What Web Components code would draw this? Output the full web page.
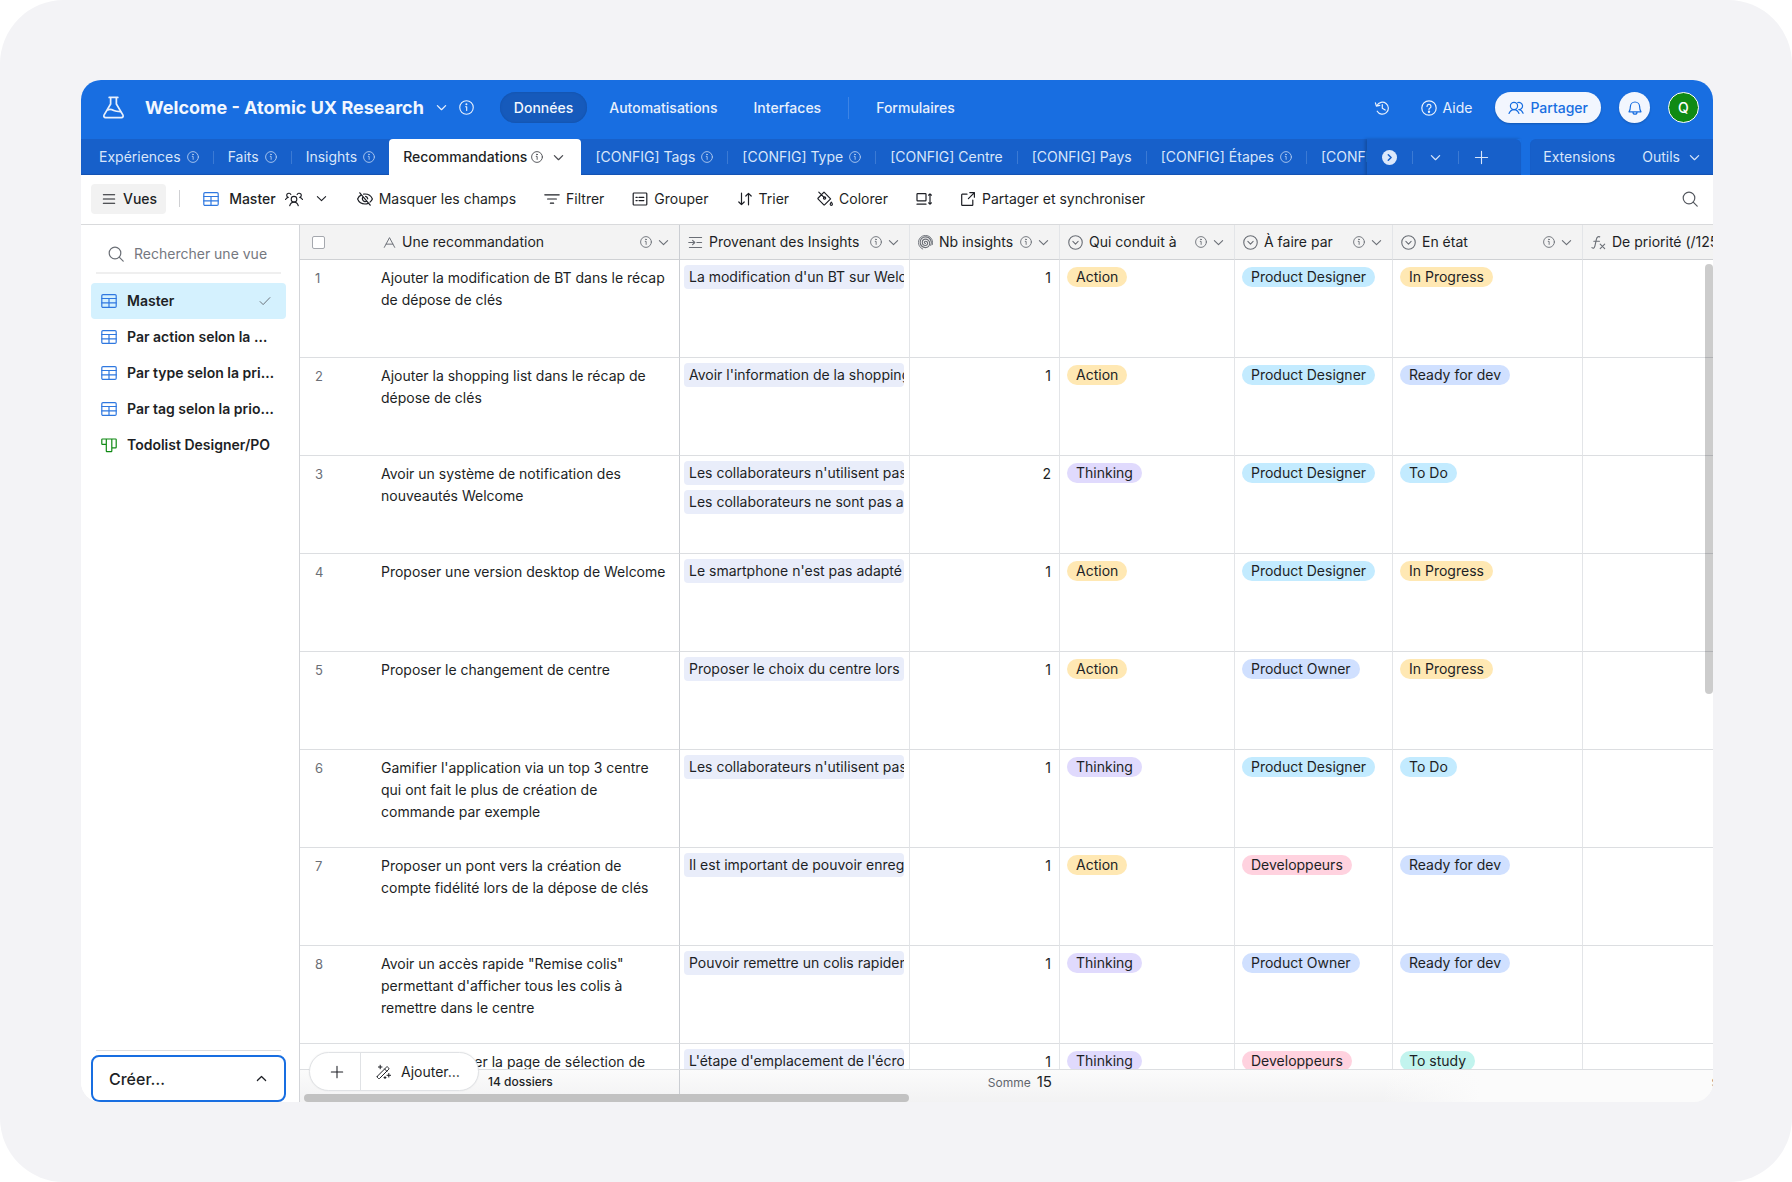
<!DOCTYPE html>
<html lang="fr">
<head>
<meta charset="utf-8">
<title>Welcome - Atomic UX Research</title>
<style>
  html { background: #fff; }
  body { margin: 0; height: 100vh; font: 400 14px/22px Inter, "Liberation Sans", sans-serif; color: #1d1f25; }
</style>
</head>
<body>
<base-app></base-app>

<script>
const ICONS = {
  flask: '<path d="M5 1h6M6 1v4.6L1.5 13.1c-.6 1 0 1.9 1 1.9h11c1 0 1.6-.9 1-1.9L10 5.6V1"/><path d="M4 9.7c1.600-.7 2.800-.3 4.200.4 1.400.7 2.800.7 4.600.7"/>',
  info: '<circle cx="8" cy="8" r="7.200"/><path d="M7 7.200h1.200v4"/><circle cx="7.900" cy="4.600" r=".5" fill="currentColor"/>',
  down: '<path d="M2 5.200l6 6 6-6"/>',
  up: '<path d="M2 11l6-6 6 6"/>',
  history: '<path d="M3 5.500A6 6 0 1 1 3.200 11.200M1.400 2.800l1 3.300 3.400-.7M8.300 4.600V8.300l2.900 1.700"/>',
  help: '<circle cx="8" cy="8" r="7.200"/><path d="M6 6.400a2 2 0 1 1 2.800 1.800c-.6.3-.8.6-.8 1.200"/><circle cx="8" cy="11.700" r=".6" fill="currentColor"/>',
  share: '<circle cx="6" cy="6" r="3.600"/><path d="M1 13.500c1-2.500 2.700-3.900 5-3.900s4 1.400 5 3.900M9.800 2.600a3.600 3.600 0 1 1 1 7c2 0 3.300 1.400 4.300 3.700"/>',
  bell: '<path d="M3.400 6.600a4.600 4.600 0 0 1 9.200 0c0 2.600.6 4 1.400 5.200H2c.8-1.200 1.400-2.600 1.400-5.200zM6 12.200a2 2 0 0 0 4 0"/>',
  next: '<circle cx="8" cy="8" r="8" fill="#dce8fb" stroke="none"/><path d="M6.700 5l3 3-3 3" stroke="#1760ca" stroke-width="1.600"/>',
  plus: '<path d="M8 1.500v13M1.500 8h13"/>',
  menu: '<path d="M1.500 3.200h13M1.500 8h13M1.500 12.800h13"/>',
  grid: '<rect x=".8" y="1.600" width="14.400" height="12.800" rx="1.200"/><path d="M.8 5.500h14.400M.8 9.900h14.400M8 5.500v8.900"/>',
  kanban: '<path d="M1.400 2h13.200c.4 0 .6.200.6.600v7.600c0 .4-.2.600-.6.600h-3.800v3.200c0 .4-.2.600-.6.600H5.900c-.4 0-.6-.2-.6-.6V7.400H1.400c-.4 0-.6-.2-.6-.6V2.600c0-.4.2-.6.600-.6zM5.300 2v5.400M10.800 2v8.800"/>',
  people: '<circle cx="8" cy="8.200" r="2.500"/><path d="M4.200 14c.6-2 2-3.200 3.800-3.200s3.200 1.200 3.800 3.200M5.200 4A1.900 1.900 0 1 0 3 6.600C1.900 6.700 1 7.400.5 8.400M10.800 4A1.900 1.900 0 1 1 13 6.600c1.100.1 2 .8 2.500 1.800"/>',
  hide: '<path d="M2.800 1.800l10.400 12.400M4.400 3.900C2.300 5 1 7 .6 8c.9 2.200 3.600 5 7.400 5 1.300 0 2.500-.3 3.500-.8M6.600 3.200C7 3.100 7.500 3 8 3c3.800 0 6.500 2.800 7.400 5-.4.9-1.200 2.100-2.400 3.100M9.800 10a2.700 2.700 0 0 1-3.600-4M8.600 5.400a2.700 2.700 0 0 1 2.100 2.400"/>',
  filter: '<path d="M.8 3.800h14.400M3.600 8h8.800M6.400 12.200h3.200"/>',
  group: '<rect x="1.200" y="2" width="13.600" height="12" rx=".8"/><path d="M7 6.400h4.800M7 9.600h4.800M4 6.400h1.200M4 9.600h1.200"/>',
  sort: '<path d="M4.500 2.200v11.400M1.800 11l2.700 2.700L7.200 11M11.500 13.800V2.400M8.800 5l2.700-2.700L14.200 5"/>',
  color: '<path d="M1.800 1.200l5.500 5.500M7 1.200l6.600 6.600-5.800 5.800c-.4.400-.8.400-1.200 0L1.200 8.200c-.4-.4-.4-.8 0-1.200z"/><circle cx="7.600" cy="7" r="1.100"/><path d="M14.300 11.200c.7.900 1.100 1.500 1.100 2.100a1.100 1.100 0 0 1-2.200 0c0-.6.4-1.200 1.100-2.100z"/>',
  height: '<rect x="1" y="2.600" width="9" height="7.200" rx=".6"/><path d="M1 13.200h9M14 2.800v10.400M12.600 4.200L14 2.800l1.400 1.400M12.600 11.800l1.400 1.400 1.400-1.400"/>',
  external: '<path d="M7 3.200H2.300c-.4 0-.6.200-.6.600v9.900c0 .4.200.6.600.6h9.900c.4 0 .6-.2.600-.6V9M9.800 1.600h4.600v4.600M14.200 1.800L8.400 7.600"/>',
  search: '<circle cx="7" cy="7" r="5.800"/><path d="M11.200 11.200l4 4"/>',
  check: '<path d="M1.500 8.800l4 4L14.500 3.500"/>',
  text: '<path d="M1.600 14L8 2l6.400 12M3.900 10h8.200"/>',
  link: '<path d="M1.500 2.700h13M9.500 8h5M1.500 13.300h13M.8 8h6.400M4.900 5.700L7.200 8l-2.300 2.300"/>',
  count: '<path d="M8 9A1.200 1.200 0 0 1 8 6.600A2.300 2.300 0 0 1 8 11.200A3.400 3.400 0 0 1 8 4.400A4.500 4.500 0 0 1 8 13.400A5.700 5.700 0 0 1 8 2A6.200 6.200 0 0 1 13.600 11"/><path d="M5 15A7.600 7.600 0 1 1 15.300 10.300" stroke-width="1"/>',
  select: '<circle cx="8" cy="8" r="7.200"/><path d="M5.200 6.900L8 9.700l2.800-2.800"/>',
  formula: '<path d="M1 13.500c1.600 1.300 2.700.4 3.200-1.800l1.600-7.200C6.300 2.300 7.500 1.200 9.300 2M3 6.700h6M9.800 9.700l4.800 4.800M14.600 9.700l-4.800 4.800"/>',
  wand: '<path d="M1.300 12.300L10.600 3c.3-.3.700-.3 1 0l1.200 1.200c.3.300.3.700 0 1L3.500 14.500c-.3.300-.7.300-1 0l-1.200-1.200c-.3-.3-.3-.7 0-1zM8.600 5l2.200 2.200M4.200 1.200v3.600M2.400 3H6M12.800 9.500v3.600M11 11.300h3.600M9 12.600v2M8 13.600h2"/>',
};

class UiIcon extends HTMLElement {
  connectedCallback() {
    const size = this.getAttribute('size') || 16;
    const weight = this.getAttribute('weight') || 1.200;
    this.attachShadow({ mode: 'open' }).innerHTML = `
      <style>:host{display:inline-flex;flex:none}svg{display:block;fill:none;stroke:currentColor;stroke-width:${weight};stroke-linecap:round;stroke-linejoin:round}</style>
      <svg width="${size}" height="${size}" viewBox="0 0 16 16" aria-hidden="true">${ICONS[this.getAttribute('name')]}</svg>`;
  }
}

const BUTTON_RESET = 'button,a{font:inherit;color:inherit;background:none;border:0;padding:0;margin:0;text-decoration:none;white-space:nowrap;display:flex;align-items:center}*{box-sizing:border-box}';

class TopBar extends HTMLElement {
  connectedCallback() {
    this.attachShadow({ mode: 'open' }).innerHTML = `
      <style>
        ${BUTTON_RESET}
        :host{display:flex;align-items:center;height:59px;padding:0 14px 4px 21px;background:#186ee1;color:#e8f0fc;box-sizing:border-box}
        h1{margin:0 0 0 20px;font-size:18px;line-height:24px;font-weight:700;color:#f2f7fe;white-space:nowrap}
        .t{gap:12px}
        .i{margin-left:12px}
        nav{display:flex;align-items:center;margin-left:26px;font-weight:500}
        nav a{height:31px;padding:0 14px;border-radius:16px}
        nav a.on{background:#165abb;color:#f2f7fe;box-shadow:inset 0 0 2px #124c9f}
        nav a.b{margin-left:8px}
        .sep{width:1px;height:22px;background:#3c84e6;margin:0 13px}
        .r{display:flex;align-items:center;margin-left:auto}
        .help{gap:6px;margin:0 23px 0 31px}
        .share{height:31px;padding:0 13px;gap:6px;border-radius:16px;background:#f2f6fe;color:#186ee1;font-weight:500;box-shadow:0 1px 2px #0003}
        .bell{width:31px;height:31px;justify-content:center;border-radius:50%;background:#f2f6fe;color:#186ee1;margin:0 18px;box-shadow:0 1px 2px #0003}
        .me{width:31px;height:31px;justify-content:center;border-radius:50%;border:1px solid #fff;background:#108a14;color:#fff;font-weight:500}
      </style>
      <ui-icon name="flask" size="23"></ui-icon>
      <button class="t"><h1>Welcome - Atomic UX Research</h1><ui-icon name="down" size="11" weight="1.800"></ui-icon></button>
      <button class="i" aria-label="Informations"><ui-icon name="info" size="15"></ui-icon></button>
      <nav>
        <a class="on" href="#">Données</a><a class="b" href="#">Automatisations</a><a class="b" href="#">Interfaces</a>
        <span class="sep"></span><a href="#">Formulaires</a>
      </nav>
      <div class="r">
        <button aria-label="Historique"><ui-icon name="history"></ui-icon></button>
        <button class="help"><ui-icon name="help"></ui-icon>Aide</button>
        <button class="share"><ui-icon name="share"></ui-icon>Partager</button>
        <button class="bell" aria-label="Notifications"><ui-icon name="bell"></ui-icon></button>
        <button class="me">Q</button>
      </div>`;
  }
}

class TableTab extends HTMLElement {
  connectedCallback() {
    this.attachShadow({ mode: 'open' }).innerHTML = `
      <style>
        ${BUTTON_RESET}
        :host{display:flex;flex:none;align-items:center;height:36px}
        a{gap:6px;padding:0 14px;height:36px}
        ui-icon{opacity:.8}
        :host(:not([active]):not([last]))::after{content:"";width:1px;height:13px;background:#3b7ad4}
        :host([active]) a{gap:4px;padding-right:17px;background:#fff;color:#1d1f25;font-weight:500;border-radius:4px 4px 0 0}
        .c{margin-left:6px}
      </style>
      <a href="#"><slot></slot>${this.hasAttribute('info') ? '<ui-icon name="info" size="12"></ui-icon>' : ''}${this.hasAttribute('active') ? '<ui-icon class="c" name="down" size="11" weight="1.800"></ui-icon>' : ''}</a>`;
  }
}

class TableTabs extends HTMLElement {
  connectedCallback() {
    this.attachShadow({ mode: 'open' }).innerHTML = `
      <style>
        ${BUTTON_RESET}
        :host{display:flex;height:36px;background:#186ee1;color:#d9e6fa}
        .bar{display:flex;flex:1;min-width:0;background:#1760ca;border-radius:0 6px 0 0;box-shadow:inset 0 -1px 1px #1453b2}
        nav{display:flex;flex:1;min-width:0;overflow:hidden;padding-left:4px}
        .ctl{display:flex;align-items:center;box-shadow:-2px 0 3px #0003}
        .ctl button{height:36px;justify-content:center}
        .n{width:45px}.d{width:45px}.p{width:62px;padding-right:17px}
        .sep{width:1px;height:13px;background:#3b7ad4}
        .ext{display:flex;align-items:center;margin-left:9px;padding:0 13px;background:#1760ca;border-radius:6px 0 0 0;gap:27px;box-shadow:inset 0 -1px 1px #1453b2}
        .o{gap:9px}
      </style>
      <div class="bar">
        <nav>
          <table-tab info>Expériences</table-tab>
          <table-tab info>Faits</table-tab>
          <table-tab info last>Insights</table-tab>
          <table-tab info active>Recommandations</table-tab>
          <table-tab info>[CONFIG] Tags</table-tab>
          <table-tab info>[CONFIG] Type</table-tab>
          <table-tab>[CONFIG] Centre</table-tab>
          <table-tab>[CONFIG] Pays</table-tab>
          <table-tab info>[CONFIG] Étapes</table-tab>
          <table-tab>[CONFIG]</table-tab>
        </nav>
        <div class="ctl">
          <button class="n" aria-label="Tables suivantes"><ui-icon name="next" size="15"></ui-icon></button><span class="sep"></span>
          <button class="d" aria-label="Toutes les tables"><ui-icon name="down" size="11" weight="1.800"></ui-icon></button><span class="sep"></span>
          <button class="p" aria-label="Ajouter une table"><ui-icon name="plus" size="15"></ui-icon></button>
        </div>
      </div>
      <div class="ext"><button>Extensions</button><button class="o">Outils<ui-icon name="down" size="11" weight="1.800"></ui-icon></button></div>`;
  }
}

class ToolButton extends HTMLElement {
  connectedCallback() {
    const label = this.getAttribute('label');
    this.attachShadow({ mode: 'open' }).innerHTML = `
      <style>${BUTTON_RESET}:host{display:flex;flex:none}button{gap:6px;height:30px}:host([label]) button{gap:0}</style>
      <button ${label ? `aria-label="${label}"` : ''}><ui-icon name="${this.getAttribute('icon')}"></ui-icon><slot></slot></button>`;
  }
}

class ViewToolbar extends HTMLElement {
  connectedCallback() {
    this.attachShadow({ mode: 'open' }).innerHTML = `
      <style>
        ${BUTTON_RESET}
        :host{display:flex;align-items:center;height:50px;padding:0 15px 2px 10px;background:#fff;border-bottom:1px solid #d9dadc;box-sizing:border-box}
        .v{height:30px;padding:0 9px 0 11px;gap:7px;border-radius:4px;background:#f2f2f2;font-weight:500}
        .sep{width:1px;height:17px;margin:0 23px 0 13px;background:#cfd0d3}
        .m{height:30px;font-weight:500;margin-right:30px}
        .m ui-icon:first-child{color:#2f78e0;margin-right:10px}
        .m ui-icon:nth-of-type(2){margin:0 13px 0 9px}
        .tools{display:flex;gap:28px}
        .s{margin-left:auto;color:#555960}
      </style>
      <button class="v"><ui-icon name="menu" size="14"></ui-icon>Vues</button>
      <span class="sep"></span>
      <button class="m"><ui-icon name="grid"></ui-icon>Master<ui-icon name="people" size="18" weight="1"></ui-icon><ui-icon name="down" size="11" weight="1.600"></ui-icon></button>
      <div class="tools">
        <tool-button icon="hide">Masquer les champs</tool-button>
        <tool-button icon="filter">Filtrer</tool-button>
        <tool-button icon="group">Grouper</tool-button>
        <tool-button icon="sort">Trier</tool-button>
        <tool-button icon="color">Colorer</tool-button>
        <tool-button icon="height" label="Hauteur de ligne"></tool-button>
        <tool-button icon="external">Partager et synchroniser</tool-button>
      </div>
      <tool-button class="s" icon="search" label="Rechercher"></tool-button>`;
  }
}

class ViewItem extends HTMLElement {
  connectedCallback() {
    this.attachShadow({ mode: 'open' }).innerHTML = `
      <style>
        ${BUTTON_RESET}
        :host{display:block}
        a{height:36px;gap:10px;padding:0 10px;border-radius:4px;font-weight:600}
        :host([active]) a{background:#d4f1fe}
        .k{color:#2f78e0}
        :host([icon=kanban]) .k{color:#108a14}
        span{flex:1;min-width:0;overflow:hidden;text-overflow:ellipsis}
        .c{color:#60646c;margin-right:5px}
      </style>
      <a href="#"><ui-icon class="k" name="${this.getAttribute('icon')}"></ui-icon><span><slot></slot></span>${this.hasAttribute('active') ? '<ui-icon class="c" name="check" size="12"></ui-icon>' : ''}</a>`;
  }
}

class ViewsSidebar extends HTMLElement {
  connectedCallback() {
    this.attachShadow({ mode: 'open' }).innerHTML = `
      <style>
        ${BUTTON_RESET}
        :host{display:flex;flex-direction:column;width:219px;flex:none;padding:10px 13px 0 10px;background:#fff;border-right:1px solid #d3d5d9;box-sizing:border-box}
        label{display:flex;align-items:center;gap:10px;height:39px;margin:0 5px;padding-left:12px;border-bottom:2px solid #efefef;color:#6b6f76}
        input{flex:1;min-width:0;border:0;padding:0;background:none;font:inherit;outline:0}
        input::placeholder{color:#75787f;opacity:1}
        nav{margin-top:9px}
        footer{margin-top:auto}
        hr{border:0;border-top:1px solid #dddee0;margin:0 5px 4px}
        .new{width:100%;height:47px;padding:0 17px 0 16px;justify-content:space-between;border:2px solid #186ee1;border-radius:8px;font-size:16px;font-weight:500}
      </style>
      <label><ui-icon name="search"></ui-icon><input type="search" placeholder="Rechercher une vue" aria-label="Rechercher une vue"></label>
      <nav>
        <view-item icon="grid" active>Master</view-item>
        <view-item icon="grid">Par action selon la priorité</view-item>
        <view-item icon="grid">Par type selon la priorité</view-item>
        <view-item icon="grid">Par tag selon la priorité</view-item>
        <view-item icon="kanban">Todolist Designer/PO</view-item>
      </nav>
      <footer><hr><button class="new">Créer…<ui-icon name="up" size="11" weight="1.800"></ui-icon></button></footer>`;
  }
}

const TONES = {
  'Action': '#ffe8b3', 'Thinking': '#e0dafd', 'Product Designer': '#c3ebff', 'Product Owner': '#d0e0ff',
  'Developpeurs': '#ffd2df', 'In Progress': '#ffe8b3', 'Ready for dev': '#d0e0ff', 'To Do': '#c3ebff', 'To study': '#c2f4ee',
};

class ChoiceTag extends HTMLElement {
  connectedCallback() {
    this.attachShadow({ mode: 'open' }).innerHTML = `
      <style>:host{display:inline-block;height:20px;line-height:20px;padding:0 9px;border-radius:10px;white-space:nowrap;background:${TONES[this.textContent]}}</style><slot></slot>`;
  }
}

class LinkedRecord extends HTMLElement {
  connectedCallback() {
    this.attachShadow({ mode: 'open' }).innerHTML = `
      <style>:host{display:block;height:24px;line-height:24px;padding-left:5px;margin-bottom:5px;border-radius:4px;white-space:nowrap;overflow:hidden;background:#e9edfa}</style><slot></slot>`;
  }
}

const ROWS = [
  ["Ajouter la modification de BT dans le récap de dépose de clés", ["La modification d'un BT sur Welcome"], 1, 'Action', 'Product Designer', 'In Progress'],
  ["Ajouter la shopping list dans le récap de dépose de clés", ["Avoir l'information de la shopping list"], 1, 'Action', 'Product Designer', 'Ready for dev'],
  ["Avoir un système de notification des nouveautés Welcome", ["Les collaborateurs n'utilisent pas", "Les collaborateurs ne sont pas au"], 2, 'Thinking', 'Product Designer', 'To Do'],
  ["Proposer une version desktop de Welcome", ["Le smartphone n'est pas adapté"], 1, 'Action', 'Product Designer', 'In Progress'],
  ["Proposer le changement de centre", ["Proposer le choix du centre lors"], 1, 'Action', 'Product Owner', 'In Progress'],
  ["Gamifier l'application via un top 3 centre qui ont fait le plus de création de commande par exemple", ["Les collaborateurs n'utilisent pas"], 1, 'Thinking', 'Product Designer', 'To Do'],
  ["Proposer un pont vers la création de compte fidélité lors de la dépose de clés", ["Il est important de pouvoir enregistrer"], 1, 'Action', 'Developpeurs', 'Ready for dev'],
  ["Avoir un accès rapide \"Remise colis\" permettant d'afficher tous les colis à remettre dans le centre", ["Pouvoir remettre un colis rapidement"], 1, 'Thinking', 'Product Owner', 'Ready for dev'],
  ["Redimensionner la page de sélection de", ["L'étape d'emplacement de l'écrou"], 1, 'Thinking', 'Developpeurs', 'To study'],
];
const FIELDS = [
  ['text', 'Une recommandation'], ['link', 'Provenant des Insights'], ['count', 'Nb insights'], ['select', 'Qui conduit à'],
  ['select', 'À faire par'], ['select', 'En état'], ['formula', 'De priorité (/125)'],
];

class RecordGrid extends HTMLElement {
  connectedCallback() {
    const head = FIELDS.map(([icon, name]) => `
      <th scope="col"><div class="h"><ui-icon name="${icon}" size="${icon === 'text' ? 13 : 15}"></ui-icon><span>${name}</span><ui-icon name="info" size="12"></ui-icon><ui-icon name="down" size="11" weight="1.600"></ui-icon></div></th>`).join('');
    const body = ROWS.map(([name, links, count, lead, owner, state], i) => `
      <tr><td class="x">${i + 1}</td><td class="name">${name}</td>
      <td class="links">${links.map(l => `<linked-record>${l}</linked-record>`).join('')}</td><td class="num">${count}</td>
      ${[lead, owner, state].map(v => `<td><choice-tag>${v}</choice-tag></td>`).join('')}<td></td></tr>`).join('');
    this.attachShadow({ mode: 'open' }).innerHTML = `
      <style>
        ${BUTTON_RESET}
        :host{display:flex;flex-direction:column;flex:1;min-width:0;position:relative;overflow:hidden;background:#fff}
        .view{flex:1;min-height:0;overflow:hidden}
        table{table-layout:fixed;width:1487px;border-collapse:separate;border-spacing:0}
        th,td{border-right:1px solid #e3e5e8;border-bottom:1px solid #dcdee1;text-align:left;vertical-align:top;font-weight:400}
        th{height:35px;padding:0 10px 0 8px;background:#f3f3f3;border-bottom-color:#cfd1d4;vertical-align:middle}
        th:first-child,td:first-child{border-right:0}
        th:nth-child(2),td:nth-child(2){border-right-color:#cbced3}
        th:first-child{padding-left:12px}
        .h{display:flex;align-items:center;gap:6px;color:#6b6f76}
        .h span{flex:1;white-space:nowrap;color:#1d1f25}
        input{appearance:none;display:block;width:13px;height:13px;margin:0;border:1px solid #a5a8ae;border-radius:2px;background:#fff}
        td{height:98px;padding:7px 7px 0 7px}
        td.x{padding-left:15px;color:#6b6f76;font-size:13px}
        td.name{padding:7px 7px 0 6px}
        td.links{padding:5px 5px 0 4px}
        td.num{text-align:right;padding-right:8px}
        choice-tag{vertical-align:top}
        footer{display:flex;flex:none;height:33px;border-top:1px solid #dcdee1;background:linear-gradient(90deg,#fbfbfb00 1080px,#fbfbfb 1180px),linear-gradient(#fbfbfb,#f2f2f3)}
        footer div{flex:none;padding-right:8px;font-size:12px;line-height:24px;white-space:nowrap;color:#62666d;text-align:right}
        footer b{font-size:15px;font-weight:400;color:#1d1f25;margin-left:6px}
        .f1{width:380px;padding-left:188px;border-right:1px solid #cbced3}
        footer .f1{text-align:left;color:#1d1f25;font-weight:500}
        .f2{width:230px}.f3{width:150px}.f4{width:523px}.f5{width:204px}
        .add{position:absolute;left:9px;bottom:11px;display:flex;height:39px;background:#fff;border:1px solid #e0e2e5;border-radius:20px;box-shadow:0 0 2px #0001}
        .add button{height:37px}
        .p{width:51px;padding-left:20px;border-right:1px solid #e0e2e5}
        .w{gap:9px;padding:0 18px 0 15px}
        .vs{position:absolute;right:0;top:39px;width:8px;height:430px;border-radius:4px;background:#00000033}
        .hs{position:absolute;left:4px;bottom:0;width:605px;height:8px;border-radius:4px;background:#c2c2c2}
      </style>
      <div class="view">
        <table>
          <colgroup><col style="width:75px"><col style="width:305px"><col style="width:230px"><col style="width:150px"><col style="width:175px"><col style="width:158px"><col style="width:190px"><col style="width:204px"></colgroup>
          <thead><tr><th><input type="checkbox" aria-label="Tout sélectionner"></th>${head}</tr></thead>
          <tbody>${body}</tbody>
        </table>
      </div>
      <footer><div class="f1">14 dossiers</div><div class="f2"></div><div class="f3">Somme<b>15</b></div><div class="f4"></div><div class="f5">Somme<b>88</b></div></footer>
      <div class="vs"></div><div class="hs"></div>
      <div class="add"><button class="p" aria-label="Ajouter un enregistrement"><ui-icon name="plus" size="14"></ui-icon></button><button class="w"><ui-icon name="wand" weight="1"></ui-icon>Ajouter…</button></div>`;
  }
}

class BaseApp extends HTMLElement {
  connectedCallback() {
    this.attachShadow({ mode: 'open' }).innerHTML = `
      <style>
        :host{display:flex;height:100%;box-sizing:border-box;padding:80px 79px 80px 81px;background:#f3f3f6;border-radius:64px}
        .window{display:flex;flex-direction:column;flex:1;min-width:0;overflow:hidden;border-radius:20px;background:#fff}
        main{display:flex;flex:1;min-height:0}
      </style>
      <div class="window">
        <top-bar></top-bar>
        <table-tabs></table-tabs>
        <view-toolbar></view-toolbar>
        <main><views-sidebar></views-sidebar><record-grid></record-grid></main>
      </div>`;
  }
}

for (const [tag, cls] of Object.entries({
  'ui-icon': UiIcon, 'top-bar': TopBar, 'table-tab': TableTab, 'table-tabs': TableTabs, 'tool-button': ToolButton,
  'view-toolbar': ViewToolbar, 'view-item': ViewItem, 'views-sidebar': ViewsSidebar, 'choice-tag': ChoiceTag,
  'linked-record': LinkedRecord, 'record-grid': RecordGrid, 'base-app': BaseApp,
})) customElements.define(tag, cls);
</script>
</body>
</html>
